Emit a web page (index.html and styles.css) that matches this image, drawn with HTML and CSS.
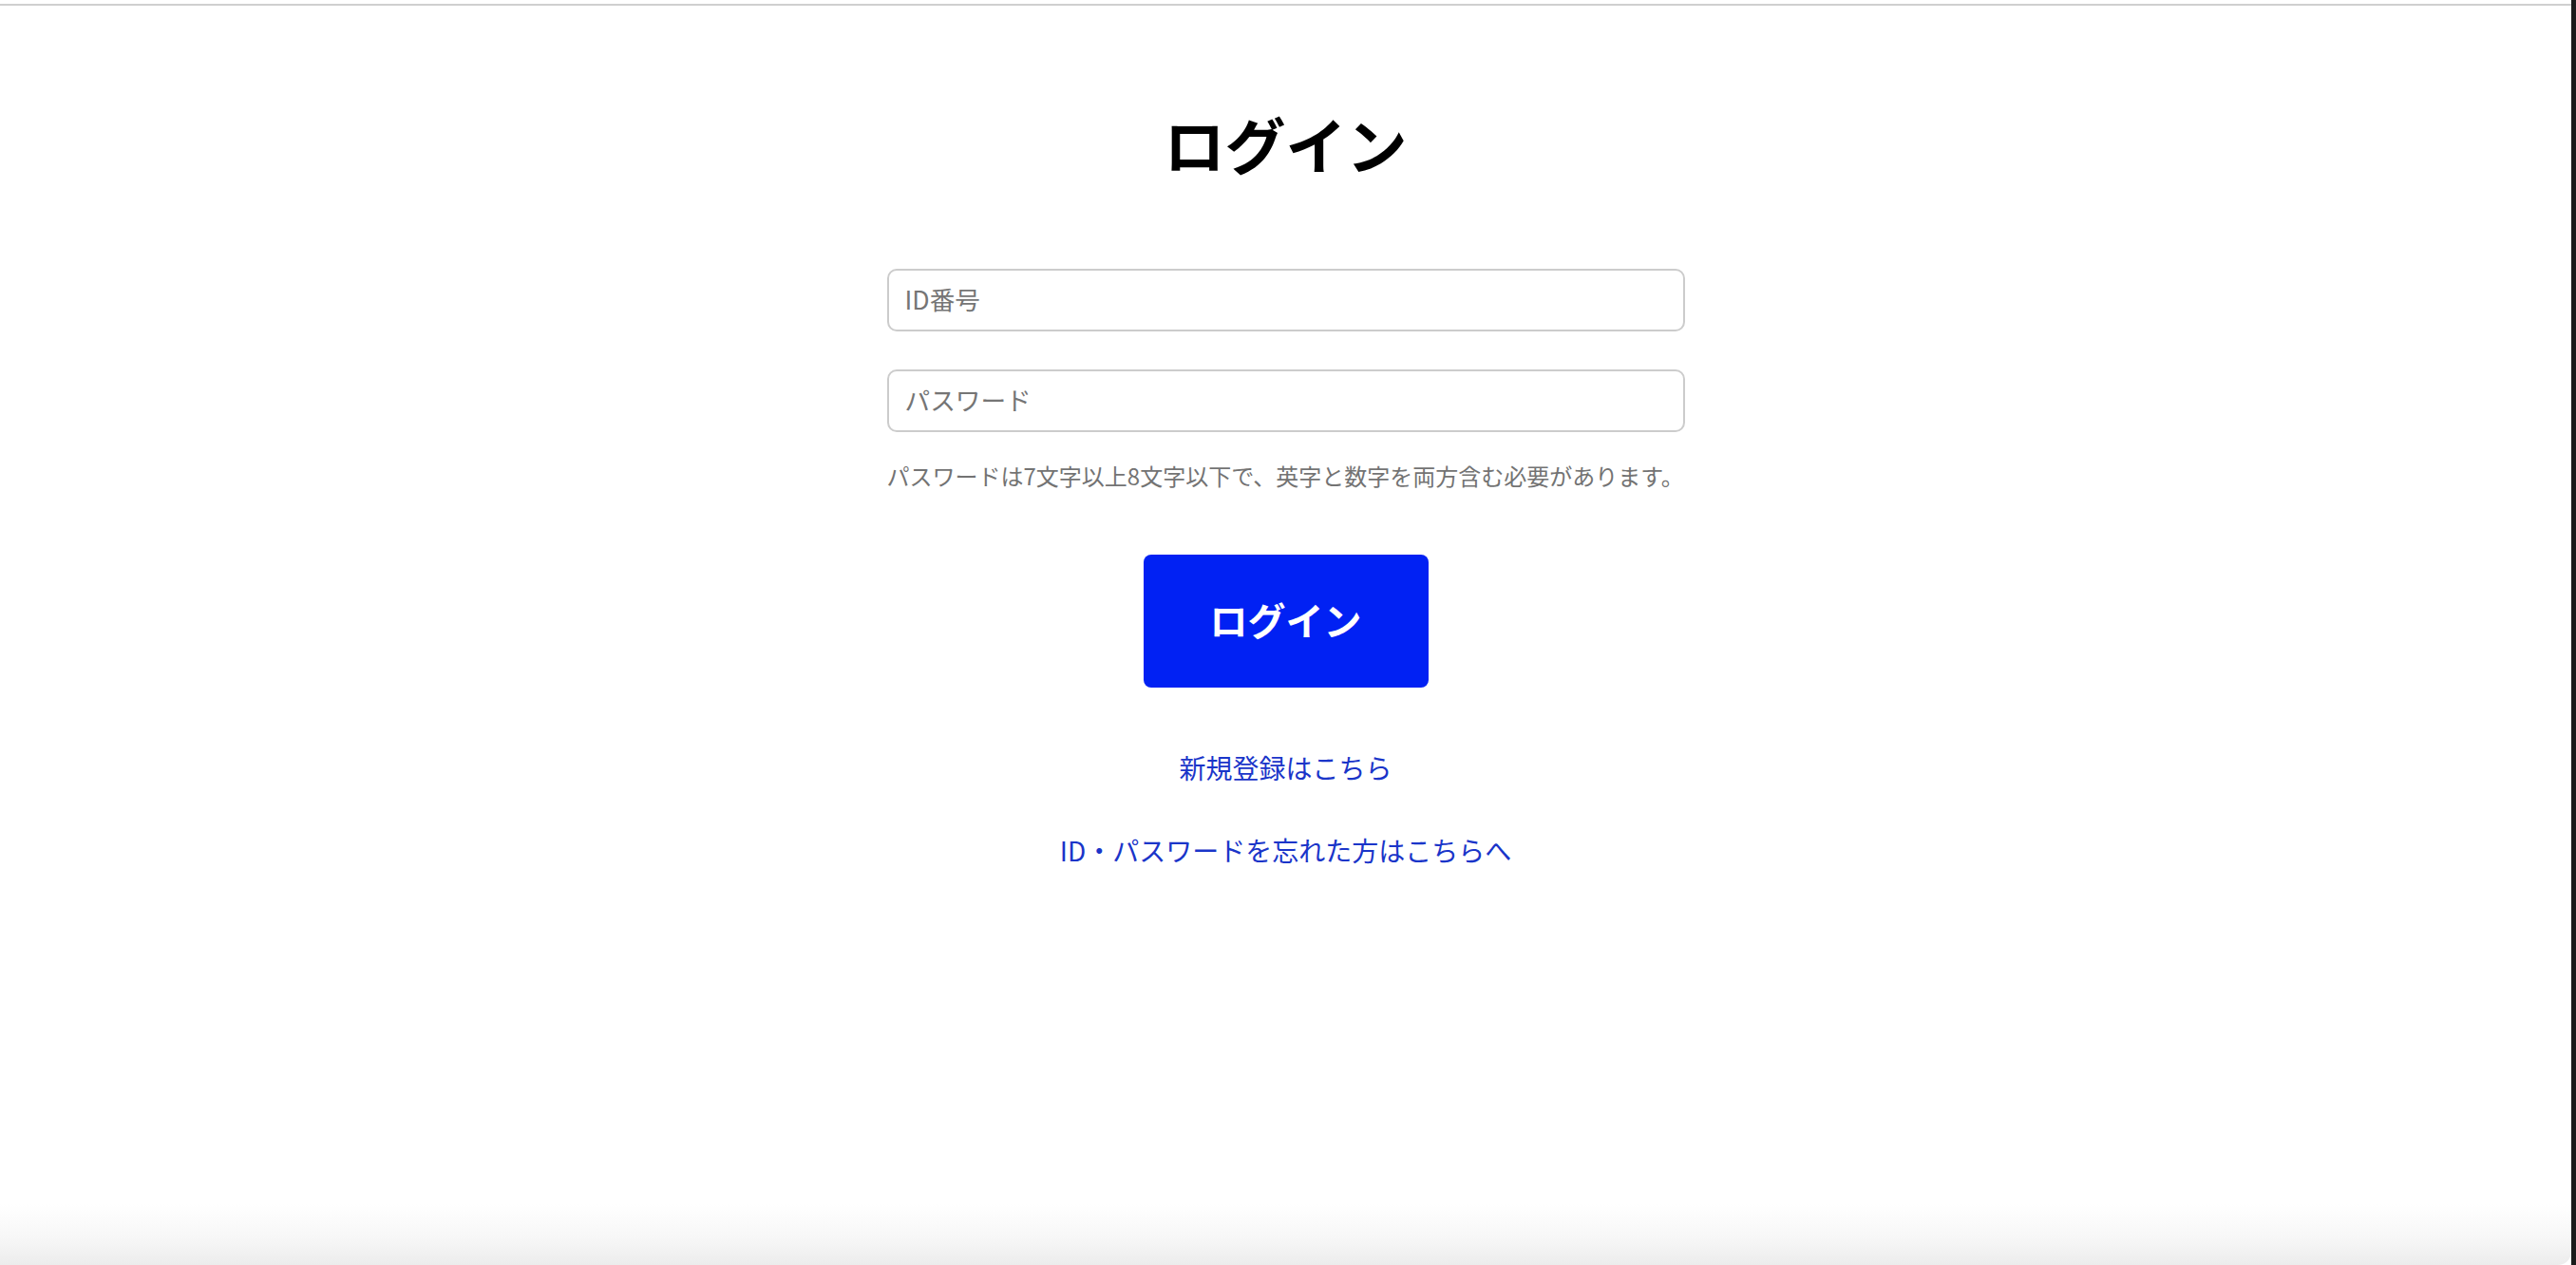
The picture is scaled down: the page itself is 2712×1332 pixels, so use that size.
FILE: index.html
```html
<!DOCTYPE html>
<html lang="ja">
<head>
<meta charset="utf-8">
<title>ログイン</title>
<link rel="stylesheet" href="styles.css">
</head>
<body>
<div class="frame">
  <div class="window">
    <div class="topbar"></div>
    <main class="login">
      <h1 class="login-title">ログイン</h1>
      <form class="login-form">
        <input class="field" type="text" placeholder="ID番号">
        <input class="field field-password" type="password" placeholder="パスワード">
        <p class="hint">パスワードは7文字以上8文字以下で、英字と数字を両方含む必要があります。</p>
        <button class="submit" type="button">ログイン</button>
      </form>
      <a class="link link-register" href="#">新規登録はこちら</a>
      <a class="link link-forgot" href="#">ID・パスワードを忘れた方はこちらへ</a>
    </main>
    <div class="bottom-shade"></div>
  </div>
  <div class="edge"></div>
</div>
</body>
</html>
```
FILE: styles.css
```css
html, body {
  margin: 0;
  padding: 0;
  height: 100%;
}

body {
  font-family: "Noto Sans CJK JP", "Noto Sans", sans-serif;
  background: #ffffff;
}

.frame {
  display: flex;
  height: 100vh;
}

.window {
  flex: 1;
  display: flex;
  flex-direction: column;
  background: #ffffff;
  border-bottom-right-radius: 14px;
  overflow: hidden;
}

.edge {
  width: 5px;
  background: #1b1b1b;
}

.topbar {
  height: 4px;
  border-bottom: 2px solid #cfcfcf;
}

.login {
  display: flex;
  flex-direction: column;
  align-items: center;
}

.login-title {
  margin: 106px 0 0;
  font-size: 64px;
  line-height: 77px;
  font-weight: 700;
  color: #000000;
}

.login-form {
  display: flex;
  flex-direction: column;
  align-items: center;
  width: 840px;
  margin-top: 94px;
}

.field {
  box-sizing: border-box;
  width: 840px;
  height: 66px;
  padding: 0 17px 4px;
  border: 2px solid #cccccc;
  border-radius: 10px;
  font-family: inherit;
  font-size: 26.67px;
  color: #333333;
  background: #ffffff;
  outline: none;
}

.field::placeholder {
  color: #757575;
}

.field-password {
  margin-top: 40px;
}

.hint {
  align-self: flex-start;
  margin: 28px 0 0;
  font-size: 24px;
  line-height: 36px;
  color: #737373;
  white-space: nowrap;
}

.submit {
  margin-top: 65px;
  width: 300px;
  height: 140px;
  padding: 0 0 5px;
  border: none;
  border-radius: 8px;
  background: #0121f3;
  color: #ffffff;
  font-family: inherit;
  font-size: 40px;
  font-weight: 700;
  cursor: pointer;
}

.link {
  font-size: 28px;
  line-height: 42px;
  color: #1a35c9;
  text-decoration: none;
}

.link-register {
  margin-top: 63px;
}

.link-forgot {
  margin-top: 45px;
}

.bottom-shade {
  margin-top: auto;
  height: 64px;
  background: linear-gradient(to bottom, #ffffff 0%, #f7f7f7 55%, #ececec 100%);
}
```
